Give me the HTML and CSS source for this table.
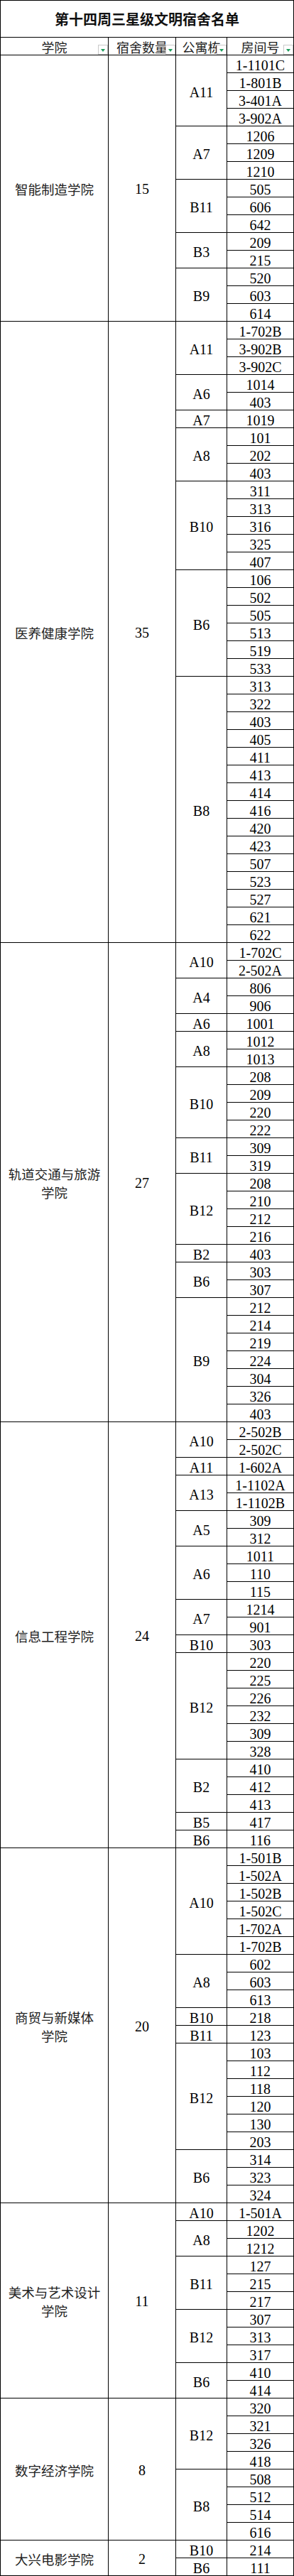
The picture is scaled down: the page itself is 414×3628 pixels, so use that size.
FILE: index.html
```html
<!DOCTYPE html>
<html lang="zh-CN">
<head>
<meta charset="utf-8">
<title>第十四周三星级文明宿舍名单</title>
<link rel="stylesheet" href="styles.css">
</head>
<body>
<div class="sheet">
  <div class="title">第十四周三星级文明宿舍名单</div>
  <div class="head">
    <div class="hc">学院<span class="filter"></span></div>
    <div class="hc">宿舍数量<span class="filter"></span></div>
    <div class="hc">公寓栋<span class="filter"></span></div>
    <div class="hc">房间号<span class="filter"></span></div>
  </div>

  <div class="college">
    <div class="name">智能制造学院</div>
    <div class="count">15</div>
    <div class="groups">
      <div class="group"><div class="bld">A11</div><div class="rooms"><div class="room">1-1101C</div><div class="room">1-801B</div><div class="room">3-401A</div><div class="room">3-902A</div></div></div>
      <div class="group"><div class="bld">A7</div><div class="rooms"><div class="room">1206</div><div class="room">1209</div><div class="room">1210</div></div></div>
      <div class="group"><div class="bld">B11</div><div class="rooms"><div class="room">505</div><div class="room">606</div><div class="room">642</div></div></div>
      <div class="group"><div class="bld">B3</div><div class="rooms"><div class="room">209</div><div class="room">215</div></div></div>
      <div class="group"><div class="bld">B9</div><div class="rooms"><div class="room">520</div><div class="room">603</div><div class="room">614</div></div></div>
    </div>
  </div>

  <div class="college">
    <div class="name">医养健康学院</div>
    <div class="count">35</div>
    <div class="groups">
      <div class="group"><div class="bld">A11</div><div class="rooms"><div class="room">1-702B</div><div class="room">3-902B</div><div class="room">3-902C</div></div></div>
      <div class="group"><div class="bld">A6</div><div class="rooms"><div class="room">1014</div><div class="room">403</div></div></div>
      <div class="group"><div class="bld">A7</div><div class="rooms"><div class="room">1019</div></div></div>
      <div class="group"><div class="bld">A8</div><div class="rooms"><div class="room">101</div><div class="room">202</div><div class="room">403</div></div></div>
      <div class="group"><div class="bld">B10</div><div class="rooms"><div class="room">311</div><div class="room">313</div><div class="room">316</div><div class="room">325</div><div class="room">407</div></div></div>
      <div class="group"><div class="bld">B6</div><div class="rooms"><div class="room">106</div><div class="room">502</div><div class="room">505</div><div class="room">513</div><div class="room">519</div><div class="room">533</div></div></div>
      <div class="group"><div class="bld">B8</div><div class="rooms"><div class="room">313</div><div class="room">322</div><div class="room">403</div><div class="room">405</div><div class="room">411</div><div class="room">413</div><div class="room">414</div><div class="room">416</div><div class="room">420</div><div class="room">423</div><div class="room">507</div><div class="room">523</div><div class="room">527</div><div class="room">621</div><div class="room">622</div></div></div>
    </div>
  </div>

  <div class="college">
    <div class="name">轨道交通与旅游<br>学院</div>
    <div class="count">27</div>
    <div class="groups">
      <div class="group"><div class="bld">A10</div><div class="rooms"><div class="room">1-702C</div><div class="room">2-502A</div></div></div>
      <div class="group"><div class="bld">A4</div><div class="rooms"><div class="room">806</div><div class="room">906</div></div></div>
      <div class="group"><div class="bld">A6</div><div class="rooms"><div class="room">1001</div></div></div>
      <div class="group"><div class="bld">A8</div><div class="rooms"><div class="room">1012</div><div class="room">1013</div></div></div>
      <div class="group"><div class="bld">B10</div><div class="rooms"><div class="room">208</div><div class="room">209</div><div class="room">220</div><div class="room">222</div></div></div>
      <div class="group"><div class="bld">B11</div><div class="rooms"><div class="room">309</div><div class="room">319</div></div></div>
      <div class="group"><div class="bld">B12</div><div class="rooms"><div class="room">208</div><div class="room">210</div><div class="room">212</div><div class="room">216</div></div></div>
      <div class="group"><div class="bld">B2</div><div class="rooms"><div class="room">403</div></div></div>
      <div class="group"><div class="bld">B6</div><div class="rooms"><div class="room">303</div><div class="room">307</div></div></div>
      <div class="group"><div class="bld">B9</div><div class="rooms"><div class="room">212</div><div class="room">214</div><div class="room">219</div><div class="room">224</div><div class="room">304</div><div class="room">326</div><div class="room">403</div></div></div>
    </div>
  </div>

  <div class="college">
    <div class="name">信息工程学院</div>
    <div class="count">24</div>
    <div class="groups">
      <div class="group"><div class="bld">A10</div><div class="rooms"><div class="room">2-502B</div><div class="room">2-502C</div></div></div>
      <div class="group"><div class="bld">A11</div><div class="rooms"><div class="room">1-602A</div></div></div>
      <div class="group"><div class="bld">A13</div><div class="rooms"><div class="room">1-1102A</div><div class="room">1-1102B</div></div></div>
      <div class="group"><div class="bld">A5</div><div class="rooms"><div class="room">309</div><div class="room">312</div></div></div>
      <div class="group"><div class="bld">A6</div><div class="rooms"><div class="room">1011</div><div class="room">110</div><div class="room">115</div></div></div>
      <div class="group"><div class="bld">A7</div><div class="rooms"><div class="room">1214</div><div class="room">901</div></div></div>
      <div class="group"><div class="bld">B10</div><div class="rooms"><div class="room">303</div></div></div>
      <div class="group"><div class="bld">B12</div><div class="rooms"><div class="room">220</div><div class="room">225</div><div class="room">226</div><div class="room">232</div><div class="room">309</div><div class="room">328</div></div></div>
      <div class="group"><div class="bld">B2</div><div class="rooms"><div class="room">410</div><div class="room">412</div><div class="room">413</div></div></div>
      <div class="group"><div class="bld">B5</div><div class="rooms"><div class="room">417</div></div></div>
      <div class="group"><div class="bld">B6</div><div class="rooms"><div class="room">116</div></div></div>
    </div>
  </div>

  <div class="college">
    <div class="name">商贸与新媒体<br>学院</div>
    <div class="count">20</div>
    <div class="groups">
      <div class="group"><div class="bld">A10</div><div class="rooms"><div class="room">1-501B</div><div class="room">1-502A</div><div class="room">1-502B</div><div class="room">1-502C</div><div class="room">1-702A</div><div class="room">1-702B</div></div></div>
      <div class="group"><div class="bld">A8</div><div class="rooms"><div class="room">602</div><div class="room">603</div><div class="room">613</div></div></div>
      <div class="group"><div class="bld">B10</div><div class="rooms"><div class="room">218</div></div></div>
      <div class="group"><div class="bld">B11</div><div class="rooms"><div class="room">123</div></div></div>
      <div class="group"><div class="bld">B12</div><div class="rooms"><div class="room">103</div><div class="room">112</div><div class="room">118</div><div class="room">120</div><div class="room">130</div><div class="room">203</div></div></div>
      <div class="group"><div class="bld">B6</div><div class="rooms"><div class="room">314</div><div class="room">323</div><div class="room">324</div></div></div>
    </div>
  </div>

  <div class="college">
    <div class="name">美术与艺术设计<br>学院</div>
    <div class="count">11</div>
    <div class="groups">
      <div class="group"><div class="bld">A10</div><div class="rooms"><div class="room">1-501A</div></div></div>
      <div class="group"><div class="bld">A8</div><div class="rooms"><div class="room">1202</div><div class="room">1212</div></div></div>
      <div class="group"><div class="bld">B11</div><div class="rooms"><div class="room">127</div><div class="room">215</div><div class="room">217</div></div></div>
      <div class="group"><div class="bld">B12</div><div class="rooms"><div class="room">307</div><div class="room">313</div><div class="room">317</div></div></div>
      <div class="group"><div class="bld">B6</div><div class="rooms"><div class="room">410</div><div class="room">414</div></div></div>
    </div>
  </div>

  <div class="college">
    <div class="name">数字经济学院</div>
    <div class="count">8</div>
    <div class="groups">
      <div class="group"><div class="bld">B12</div><div class="rooms"><div class="room">320</div><div class="room">321</div><div class="room">326</div><div class="room">418</div></div></div>
      <div class="group"><div class="bld">B8</div><div class="rooms"><div class="room">508</div><div class="room">512</div><div class="room">514</div><div class="room">616</div></div></div>
    </div>
  </div>

  <div class="college">
    <div class="name">大兴电影学院</div>
    <div class="count">2</div>
    <div class="groups">
      <div class="group"><div class="bld">B10</div><div class="rooms"><div class="room">214</div></div></div>
      <div class="group"><div class="bld">B6</div><div class="rooms"><div class="room">111</div></div></div>
    </div>
  </div>
</div>
</body>
</html>
```
FILE: styles.css
```css
html, body {
  margin: 0;
  padding: 0;
  background: #fff;
}

.sheet {
  width: 414px;
  box-sizing: border-box;
  padding: 1px;
  background: #000;
  display: flex;
  flex-direction: column;
  gap: 1px;
  color: #000;
  font-family: "Liberation Serif", "Noto Sans CJK SC", serif;
}

.title {
  height: 51px;
  background: #fff;
  display: flex;
  align-items: center;
  justify-content: center;
  font-family: "Noto Sans CJK SC", sans-serif;
  font-weight: 700;
  font-size: 20px;
  color: #111;
}

.head,
.college {
  display: grid;
  grid-template-columns: 151px 94px 71px 93px;
  gap: 1px;
}

.hc {
  position: relative;
  height: 24px;
  background: #fff;
  display: flex;
  align-items: center;
  justify-content: center;
  padding-top: 1px;
  box-sizing: border-box;
  font-family: "Noto Sans CJK SC", sans-serif;
  font-size: 18px;
  line-height: 20px;
  color: #222;
  white-space: nowrap;
}

.filter {
  position: absolute;
  right: 0;
  bottom: 0;
  width: 14px;
  height: 14px;
  box-sizing: border-box;
  border: 1px solid #c9c9c9;
  background: #fff;
}

.filter::after {
  content: "";
  position: absolute;
  left: 3px;
  top: 5px;
  border-left: 3.5px solid transparent;
  border-right: 3.5px solid transparent;
  border-top: 4px solid #1e9d5c;
}

.name {
  background: #fff;
  display: flex;
  align-items: center;
  justify-content: center;
  text-align: center;
  padding-top: 2px;
  font-family: "Noto Sans CJK SC", sans-serif;
  font-size: 18.5px;
  line-height: 26px;
  color: #222;
}

.count {
  background: #fff;
  display: flex;
  align-items: center;
  justify-content: center;
  padding-top: 3px;
  font-size: 20px;
}

.groups {
  grid-column: 3 / span 2;
  display: flex;
  flex-direction: column;
  gap: 1px;
}

.group {
  display: grid;
  grid-template-columns: 71px 93px;
  gap: 1px;
}

.bld {
  background: #fff;
  display: flex;
  align-items: center;
  justify-content: center;
  box-sizing: border-box;
  padding-top: 4px;
  font-size: 20px;
  line-height: 20px;
}

.rooms {
  display: flex;
  flex-direction: column;
  gap: 1px;
}

.room {
  height: 24px;
  box-sizing: border-box;
  padding-top: 4px;
  background: #fff;
  text-align: center;
  font-size: 20px;
  line-height: 20px;
  white-space: nowrap;
}
```
